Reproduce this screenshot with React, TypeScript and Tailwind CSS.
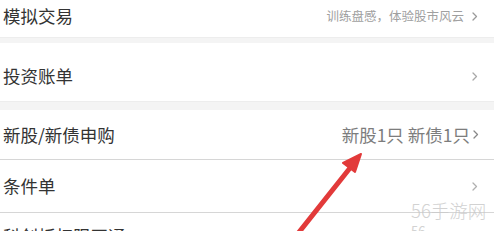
import React from "react";

function Chevron({ className }: { className: string }) {
  return (
    <svg className={className} width="6" height="9" viewBox="0 0 6 9" fill="none">
      <path d="M1 1l3.5 3.5L1 8" stroke="currentColor" strokeWidth="1.3" strokeLinecap="round" strokeLinejoin="round" />
    </svg>
  );
}

export default function App() {
  return (
    <div className="relative w-[494px] h-[231px] overflow-hidden bg-white font-['Noto_Sans_CJK_SC',sans-serif]">
      <div className="flex flex-col">
        <div className="h-[37px] pb-[5px] pl-[3px] pr-[16px] flex items-center justify-between">
          <span className="text-[17.5px] leading-none text-[#333]">模拟交易</span>
          <div className="flex items-center gap-[8px] text-[#a0a0a0]">
            <span className="text-[12.5px] leading-none">训练盘感，体验股市风云</span>
            <Chevron className="text-[#9a9a9a]" />
          </div>
        </div>
        <div className="h-[6px] bg-[#f4f4f4] border-t border-[#ededed]" />
        <div className="h-[58px] pt-[8px] pl-[3px] pr-[16px] flex items-center justify-between">
          <span className="text-[17.5px] leading-none text-[#333]">投资账单</span>
          <Chevron className="text-[#a8a8a8]" />
        </div>
        <div className="h-[9px] bg-[#f4f4f4] border-t border-[#ededed]" />
        <div className="h-[50px] pl-[3px] pr-[15px] flex items-center justify-between border-b border-[#d6d6d6]">
          <span className="text-[17.5px] leading-none text-[#333]">新股/新债申购</span>
          <div className="flex items-center gap-[3px] text-[#7d7d7d]">
            <span className="text-[17.5px] leading-none">新股1只 新债1只</span>
            <Chevron className="text-[#888]" />
          </div>
        </div>
        <div className="h-[53px] pl-[3px] pr-[16px] flex items-center justify-between border-b border-[#d6d6d6]">
          <span className="text-[17.5px] leading-none text-[#333]">条件单</span>
          <Chevron className="text-[#b0b0b0]" />
        </div>
        <div className="pt-[11px] pl-[3px]">
          <span className="text-[17.5px] leading-none text-[#333]">科创板权限开通</span>
        </div>
      </div>

      <div className="absolute left-[411px] top-[201px] flex flex-col whitespace-nowrap text-[#c8c8c8] opacity-80 leading-none">
        <span className="text-[18.5px] font-light">56手游网</span>
        <span className="text-[13px] mt-[4px]">56</span>
      </div>

      <svg className="absolute left-0 top-0" width="494" height="231" viewBox="0 0 494 231">
        <path d="M296 236 L350 168" stroke="#e23a3a" strokeWidth="5" strokeLinecap="round" />
        <path d="M361 154 L343 163 L355 172 Z" fill="#e23a3a" stroke="#e23a3a" strokeWidth="2" strokeLinejoin="round" />
      </svg>
    </div>
  );
}
